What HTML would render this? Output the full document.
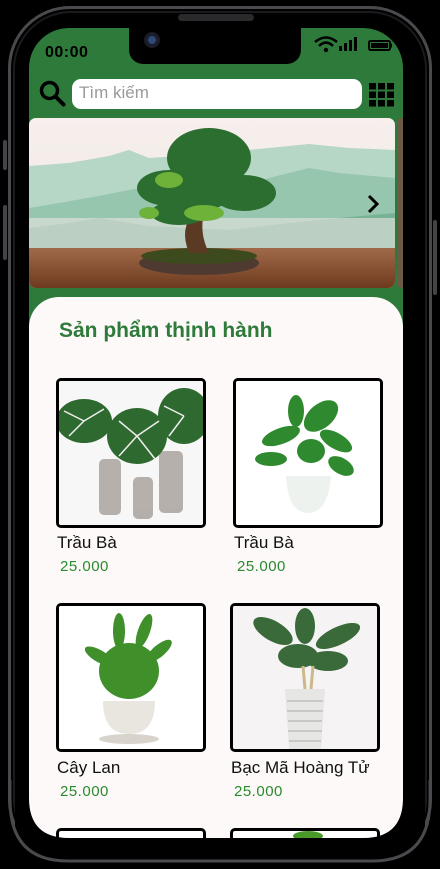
<!DOCTYPE html>
<html><head><meta charset="utf-8"><style>
*{margin:0;padding:0;box-sizing:border-box}
body{width:440px;height:869px;background:#000;position:relative;overflow:hidden;font-family:"Liberation Sans",sans-serif}
.abs{position:absolute}
.bezel{left:8px;top:6px;width:424px;height:856px;border:3px solid #4a4a4e;border-radius:62px}
.bezel2{left:13px;top:11px;width:414px;height:846px;border:2px solid #1b1b1d;border-radius:58px}
.screen{left:29px;top:28px;width:374px;height:810px;border-radius:40px 40px 44px 44px;overflow:hidden;background:#2d7a3a}
.notch{left:129px;top:28px;width:172px;height:36px;background:#000;border-radius:0 0 14px 14px}
.card{background:#fdf9f8;left:29px;top:297px;width:374px;height:560px;border-radius:30px 30px 0 0}
.pc{border:3px solid #000;border-radius:5px;background:#fff;overflow:hidden}
.nm{font-size:17px;color:#111}
.pr{font-size:15px;color:#2a8a2e;letter-spacing:.5px}
</style></head><body>
<div class="abs bezel"></div>
<div class="abs bezel2"></div>
<div class="abs" style="left:178px;top:14px;width:76px;height:7px;border-radius:4px;background:#2a2a2c"></div>
<div class="abs" style="left:3px;top:140px;width:4px;height:30px;background:#444;border-radius:2px"></div>
<div class="abs" style="left:3px;top:205px;width:4px;height:55px;background:#444;border-radius:2px"></div>
<div class="abs" style="left:433px;top:220px;width:4px;height:75px;background:#444;border-radius:2px"></div>
<div class="abs screen"></div>
<div class="abs notch"></div>
<div class="abs" style="left:144px;top:32px;width:16px;height:16px;border-radius:50%;background:#1a1d28"><div style="margin:4px;width:8px;height:8px;border-radius:50%;background:#2d4c7a"></div></div>
<div class="abs" style="left:45px;top:44px;font-weight:bold;font-size:16px;color:#000;letter-spacing:.5px">00:00</div>
<svg class="abs" style="left:314px;top:35px" width="80" height="18" viewBox="0 0 80 18">
<path d="M1 7 Q12 -2 23 7" stroke="#000" stroke-width="2.5" fill="none"/><path d="M5 11 Q12 4 19 11" stroke="#000" stroke-width="2.5" fill="none"/><circle cx="12" cy="15" r="2.2"/>
<rect x="25" y="11" width="3" height="5"/><rect x="30" y="8" width="3" height="8"/><rect x="35" y="5" width="3" height="11"/><rect x="40" y="2" width="3" height="14"/>
<rect x="55" y="6" width="21" height="9" rx="1.5" fill="none" stroke="#000" stroke-width="2"/><rect x="57" y="8" width="17" height="5"/><rect x="76" y="8.5" width="2" height="4"/>
</svg>
<svg class="abs" style="left:39px;top:80px" width="27" height="27" viewBox="0 0 27 27"><circle cx="10.5" cy="10.5" r="8" stroke="#000" stroke-width="3.5" fill="none"/><path d="M16.5 16.5 L24.5 24.5" stroke="#000" stroke-width="4" stroke-linecap="round"/></svg>
<div class="abs" style="left:72px;top:79px;width:290px;height:30px;background:#fff;border-radius:9px;font-size:17px;color:#999;padding:4px 7px">Tìm kiếm</div>
<svg class="abs" style="left:369px;top:83px" width="25" height="24" viewBox="0 0 25 24"><g fill="#000"><rect x="0" y="0" width="7" height="6.5"/><rect x="9" y="0" width="7" height="6.5"/><rect x="18" y="0" width="7" height="6.5"/><rect x="0" y="8.5" width="7" height="6.5"/><rect x="9" y="8.5" width="7" height="6.5"/><rect x="18" y="8.5" width="7" height="6.5"/><rect x="0" y="17" width="7" height="6.5"/><rect x="9" y="17" width="7" height="6.5"/><rect x="18" y="17" width="7" height="6.5"/></g></svg>
<svg class="abs" style="left:29px;top:118px;border-radius:7px" width="366" height="170" viewBox="0 0 366 170">
<defs><linearGradient id="sky" x1="0" y1="0" x2="0" y2="1"><stop offset="0" stop-color="#f6efec"/><stop offset="1" stop-color="#eee6e3"/></linearGradient>
<linearGradient id="fl" x1="0" y1="0" x2="0" y2="1"><stop offset="0" stop-color="#a06a4a"/><stop offset="1" stop-color="#6e3a1e"/></linearGradient></defs>
<rect width="366" height="170" fill="url(#sky)"/>
<path d="M0 48 L40 45 L80 38 L100 32 L120 40 L180 36 L240 30 L280 26 L320 30 L366 32 L366 130 L0 130Z" fill="#b6d6c6"/>
<path d="M0 90 L30 85 L70 78 L110 70 L150 75 L200 70 L240 60 L280 50 L310 55 L366 60 L366 130 L0 130Z" fill="#8fc2a6" opacity=".8"/>
<path d="M0 110 L40 105 L70 100 L120 108 L200 112 L260 105 L310 100 L366 95 L366 130 L0 130Z" fill="#6aa98a" opacity=".7"/>
<rect y="100" width="366" height="30" fill="#e9e4e2" opacity=".6"/>
<rect y="130" width="366" height="40" fill="url(#fl)"/>
<ellipse cx="170" cy="145" rx="60" ry="12" fill="#4e3a30"/>
<ellipse cx="170" cy="138" rx="58" ry="8" fill="#3d4a1e"/>
<path d="M160 135 Q150 110 165 95 L175 95 Q170 115 180 135Z" fill="#5a3a22"/>
<g fill="#2c6e2f"><ellipse cx="180" cy="40" rx="42" ry="30"/><ellipse cx="140" cy="70" rx="32" ry="18"/><ellipse cx="215" cy="75" rx="32" ry="18"/><ellipse cx="175" cy="70" rx="30" ry="22"/><ellipse cx="150" cy="95" rx="28" ry="12"/></g>
<g fill="#6fb23a"><ellipse cx="140" cy="62" rx="14" ry="8"/><ellipse cx="175" cy="95" rx="20" ry="8"/><ellipse cx="120" cy="95" rx="10" ry="6"/></g>
<path d="M340 78 L348 86 L340 94" stroke="#000" stroke-width="3" fill="none"/>
</svg>
<div class="abs" style="left:397px;top:118px;width:6px;height:170px;background:#6b5a45;border-radius:4px 0 0 4px"></div>
<div class="abs card"></div>
<div class="abs" style="left:59px;top:319px;font-weight:bold;font-size:21px;color:#2d7a3a">Sản phẩm thịnh hành</div>
<div class="abs pc" style="left:56px;top:378px;width:150px;height:150px">
<svg width="144" height="144" viewBox="0 0 144 144"><rect width="144" height="144" fill="#f7f7f7"/>
<g fill="#9a928c" opacity=".7"><rect x="40" y="78" width="22" height="56" rx="5"/><rect x="74" y="96" width="20" height="42" rx="5"/><rect x="100" y="70" width="24" height="62" rx="5"/></g>
<g fill="#2e6a2f"><ellipse cx="25" cy="40" rx="28" ry="22"/><ellipse cx="78" cy="55" rx="30" ry="28"/><ellipse cx="125" cy="35" rx="26" ry="28"/></g>
<g stroke="#eee" stroke-width="1.5"><path d="M25 40 L5 30 M25 40 L10 55 M25 40 L45 28"/><path d="M78 55 L60 40 M78 55 L100 40 M78 55 L60 75 M78 55 L96 78"/><path d="M125 35 L105 25 M125 35 L110 55"/></g></svg></div>
<div class="abs pc" style="left:233px;top:378px;width:150px;height:150px">
<svg width="144" height="144" viewBox="0 0 144 144"><rect width="144" height="144" fill="#fff"/>
<path d="M50 95 Q52 132 72 132 Q92 132 95 95Z" fill="#eef2ee"/>
<g fill="#2f8a2f"><ellipse cx="45" cy="55" rx="20" ry="8" transform="rotate(-20 45 55)"/><ellipse cx="60" cy="30" rx="8" ry="16"/><ellipse cx="85" cy="35" rx="20" ry="12" transform="rotate(-40 85 35)"/><ellipse cx="100" cy="60" rx="18" ry="8" transform="rotate(30 100 60)"/><ellipse cx="75" cy="70" rx="14" ry="12"/><ellipse cx="35" cy="78" rx="16" ry="7"/><ellipse cx="105" cy="85" rx="14" ry="8" transform="rotate(30 105 85)"/></g></svg></div>
<div class="abs nm" style="left:57px;top:533px">Trầu Bà</div>
<div class="abs pr" style="left:60px;top:558px">25.000</div>
<div class="abs nm" style="left:234px;top:533px">Trầu Bà</div>
<div class="abs pr" style="left:237px;top:558px">25.000</div>
<div class="abs pc" style="left:56px;top:603px;width:150px;height:149px">
<svg width="144" height="143" viewBox="0 0 144 143"><rect width="144" height="143" fill="#fff"/>
<path d="M44 95 Q44 128 70 128 Q96 128 96 95Z" fill="#e9e6e0"/><ellipse cx="70" cy="133" rx="30" ry="5" fill="#d8d4cc"/>
<g fill="#3f8f2a"><ellipse cx="70" cy="65" rx="30" ry="28"/><ellipse cx="40" cy="50" rx="16" ry="6" transform="rotate(30 40 50)"/><ellipse cx="100" cy="45" rx="16" ry="6" transform="rotate(-40 100 45)"/><ellipse cx="60" cy="25" rx="6" ry="18"/><ellipse cx="85" cy="25" rx="6" ry="18" transform="rotate(20 85 25)"/></g></svg></div>
<div class="abs pc" style="left:230px;top:603px;width:150px;height:149px">
<svg width="144" height="143" viewBox="0 0 144 143"><rect width="144" height="143" fill="#f6f3f5"/>
<path d="M52 83 L92 83 L88 143 L56 143Z" fill="#e6e6e4"/><g stroke="#c8c8c6" stroke-width="2"><path d="M54 95H90M54 105H90M55 115H89M55 125H89M56 135H88"/></g>
<g fill="#3a6a3a"><ellipse cx="40" cy="25" rx="22" ry="10" transform="rotate(30 40 25)"/><ellipse cx="72" cy="20" rx="10" ry="18"/><ellipse cx="105" cy="30" rx="24" ry="9" transform="rotate(-25 105 30)"/><ellipse cx="65" cy="50" rx="20" ry="12"/><ellipse cx="95" cy="55" rx="20" ry="10"/></g>
<path d="M70 60 L72 83 M80 60 L78 83" stroke="#cbb98a" stroke-width="3"/></svg></div>
<div class="abs nm" style="left:57px;top:758px">Cây Lan</div>
<div class="abs pr" style="left:60px;top:783px">25.000</div>
<div class="abs nm" style="left:231px;top:758px">Bạc Mã Hoàng Tử</div>
<div class="abs pr" style="left:234px;top:783px">25.000</div>
<div class="abs pc" style="left:56px;top:828px;width:150px;height:40px;border-bottom:none"></div>
<div class="abs pc" style="left:230px;top:828px;width:150px;height:40px;border-bottom:none"><div style="margin-left:60px;width:30px;height:10px;background:#4a9a2a;border-radius:50%"></div></div>
<svg class="abs" style="left:0;top:760px" width="440" height="109" viewBox="0 0 440 109"><path d="M29 30 L29 38 Q29 78 69 78 L363 78 Q403 78 403 38 L403 30 L425 30 L425 109 L15 109 L15 30Z" fill="#000"/><path d="M10 20 L10 40 Q10 101 68 101 L372 101 Q430 101 430 40 L430 20" fill="none" stroke="#4a4a4e" stroke-width="3"/></svg>
</body></html>
